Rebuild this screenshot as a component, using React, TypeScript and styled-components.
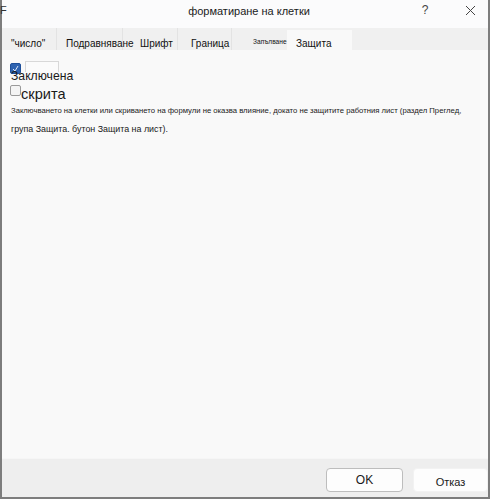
import React from 'react';
import styled, { createGlobalStyle } from 'styled-components';

const Global = createGlobalStyle`
	html, body {
		margin: 0;
		padding: 0;
		background: #ffffff;
	}
	* {
		box-sizing: border-box;
	}
`;

const Window = styled.div`
	width: 490px;
	height: 499px;
	display: flex;
	flex-direction: column;
	border-left: 2px solid #7d7d7d;
	border-right: 2px solid #7d7d7d;
	border-bottom: 2px solid #7d7d7d;
	font-family: 'Liberation Sans', 'Noto Sans', sans-serif;
	color: #1a1a1a;
`;

const TitleBar = styled.div`
	height: 28px;
	background: #fbfbfc;
	display: flex;
	align-items: center;
	position: relative;
`;

const AppLetter = styled.span`
	position: absolute;
	left: -2px;
	top: 5px;
	font-size: 11px;
	line-height: 11px;
	color: #333;
`;

const Title = styled.div`
	flex: 1;
	text-align: center;
	font-size: 11px;
	padding-left: 84px;
	padding-bottom: 6px;
`;

const TitleButton = styled.span<{ $w: number; $gap?: number }>`
	width: ${(p) => p.$w}px;
	margin-right: ${(p) => p.$gap ?? 0}px;
	font-size: 12px;
	color: #444;
	padding-bottom: 8px;
	display: flex;
	justify-content: center;
`;

const TabBar = styled.div`
	height: 22px;
	background: #f0f0f0;
	display: flex;
	align-items: flex-end;
`;

const Tab = styled.div<{ $w: number; $pad: number; $active?: boolean; $sep?: boolean }>`
	flex: none;
	width: ${(p) => p.$w}px;
	height: ${(p) => (p.$active ? 20 : 22)}px;
	display: flex;
	align-items: flex-end;
	padding-left: ${(p) => p.$pad}px;
	padding-bottom: 1px;
	font-size: 10px;
	color: #111;
	white-space: nowrap;
	background: ${(p) => (p.$active ? '#f9f9f9' : 'transparent')};
	border-right: ${(p) => (p.$sep ? '1px solid #e3e3e3' : 'none')};
`;

const TinyLabel = styled.span`
	font-size: 6.6px;
	margin-bottom: 4px;
`;

const Content = styled.div`
	flex: 1;
	background: #f9f9f9;
	padding: 13px 0 0 8px;
	display: flex;
	flex-direction: column;
`;

const CheckRow = styled.div`
	display: flex;
	align-items: flex-start;
	height: 11px;
`;

const Box = styled.span<{ $checked?: boolean }>`
	width: 11px;
	height: 11px;
	border-radius: 2px;
	display: inline-flex;
	align-items: center;
	justify-content: center;
	background: ${(p) => (p.$checked ? '#2f63b0' : '#f4f4f4')};
	border: 1px solid ${(p) => (p.$checked ? '#1e4f9a' : '#9a9a9a')};
	flex: none;
`;

const GhostBox = styled.span`
	margin-left: 4px;
	margin-top: -2px;
	width: 34px;
	height: 11px;
	border: 1px solid #d8d8d8;
	border-bottom: none;
	background: #fbfbfb;
`;

const LockedLabel = styled.div`
	font-size: 12.2px;
	line-height: 14px;
	margin-top: -5px;
	margin-left: 1px;
`;

const HiddenRow = styled.div`
	display: flex;
	align-items: flex-start;
	margin-top: 2px;
`;

const HiddenLabel = styled.span`
	font-size: 14.6px;
	line-height: 16px;
	margin-top: 1px;
`;

const Note = styled.div<{ $size: number; $top: number }>`
	font-size: ${(p) => p.$size}px;
	margin-top: ${(p) => p.$top}px;
	white-space: nowrap;
	line-height: 1;
	padding-left: 1px;
`;

const Footer = styled.div`
	height: 39px;
	background: #eeeeee;
	border-top: 1px solid #f6f6f6;
	display: flex;
	justify-content: flex-end;
	align-items: flex-start;
	padding-top: 9px;
	gap: 10px;
`;

const Button = styled.button<{ $primary?: boolean }>`
	width: ${(p) => (p.$primary ? 77 : 75)}px;
	height: 24px;
	border-radius: 4px;
	font-family: 'Liberation Sans', 'Noto Sans', sans-serif;
	font-size: ${(p) => (p.$primary ? 12 : 11)}px;
	color: #1a1a1a;
	background: #fdfdfd;
	border: 1px solid ${(p) => (p.$primary ? '#bdbdbd' : '#f2f2f2')};
	padding: 0;
	padding-top: ${(p) => (p.$primary ? 0 : 4)}px;
`;

export default function App() {
	return (
		<>
			<Global />
			<Window>
				<TitleBar>
					<AppLetter>F</AppLetter>
					<Title>форматиране на клетки</Title>
					<TitleButton $w={26} $gap={14}>?</TitleButton>
					<TitleButton $w={36}>
						<svg width='11' height='11' viewBox='0 0 11 11'>
							<path d='M1 1 L10 10 M10 1 L1 10' stroke='#444' strokeWidth='1' fill='none' />
						</svg>
					</TitleButton>
				</TitleBar>
				<TabBar>
					<Tab $w={55} $pad={9} $sep>"число"</Tab>
					<Tab $w={66} $pad={9} $sep>Подравняване</Tab>
					<Tab $w={55} $pad={17} $sep>Шрифт</Tab>
					<Tab $w={54} $pad={13} $sep>Граница</Tab>
					<Tab $w={55} $pad={21}>
						<TinyLabel>Запълване</TinyLabel>
					</Tab>
					<Tab $w={65} $pad={9} $active>Защита</Tab>
				</TabBar>
				<Content>
					<CheckRow>
						<Box $checked>
							<svg width='7' height='7' viewBox='0 0 7 7'>
								<path d='M1 4 L3 6 L6 1' stroke='#dfe8f7' strokeWidth='1' fill='none' />
							</svg>
						</Box>
						<GhostBox />
					</CheckRow>
					<LockedLabel>Заключена</LockedLabel>
					<HiddenRow>
						<Box />
						<HiddenLabel>скрита</HiddenLabel>
					</HiddenRow>
					<Note $size={7.7} $top={5}>
						Заключването на клетки или скриването на формули не оказва влияние, докато не защитите работния лист (раздел Преглед,
					</Note>
					<Note $size={8.9} $top={10}>
						група Защита. бутон Защита на лист).
					</Note>
				</Content>
				<Footer>
					<Button $primary>OK</Button>
					<Button>Отказ</Button>
				</Footer>
			</Window>
		</>
	);
}
